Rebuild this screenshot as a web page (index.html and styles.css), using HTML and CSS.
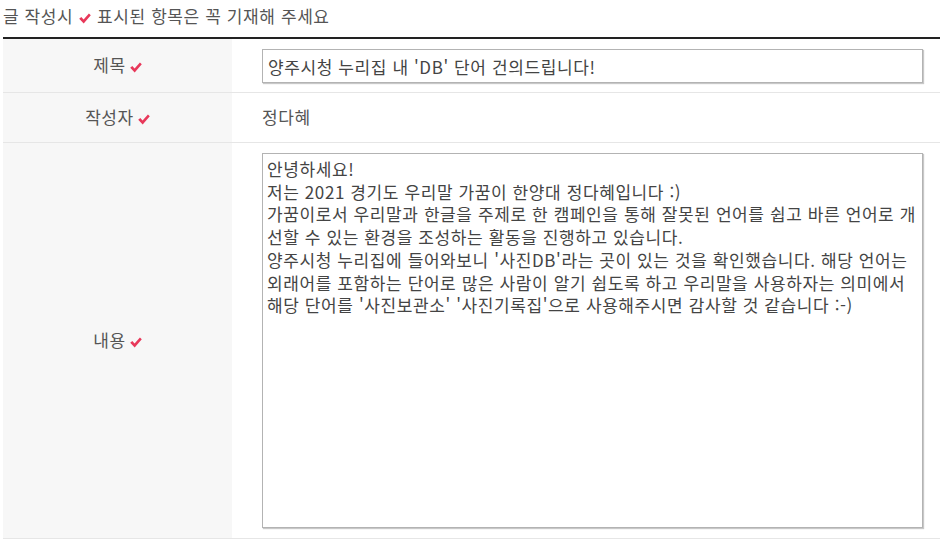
FILE: index.html
```html
<!DOCTYPE html>
<html lang="ko">
<head>
<meta charset="utf-8">
<title>글쓰기</title>
<link rel="stylesheet" href="styles.css">
</head>
<body>
<div class="page">
  <p class="notice">글 작성시 <svg class="req" viewBox="0 0 12 11" aria-hidden="true"><path d="M0.2 5.8 L2.3 4.1 L4.6 6.5 L9.9 0.6 L11.8 2.2 L4.7 10.4 Z"/></svg> 표시된 항목은 꼭 기재해 주세요</p>
  <table class="form">
    <tr class="row-title">
      <th>제목<svg class="req" viewBox="0 0 12 11" aria-hidden="true"><path d="M0.2 5.8 L2.3 4.1 L4.6 6.5 L9.9 0.6 L11.8 2.2 L4.7 10.4 Z"/></svg></th>
      <td><input class="field" type="text" value="양주시청 누리집 내 'DB' 단어 건의드립니다!"></td>
    </tr>
    <tr class="row-writer">
      <th>작성자<svg class="req" viewBox="0 0 12 11" aria-hidden="true"><path d="M0.2 5.8 L2.3 4.1 L4.6 6.5 L9.9 0.6 L11.8 2.2 L4.7 10.4 Z"/></svg></th>
      <td class="text">정다혜</td>
    </tr>
    <tr class="row-body">
      <th>내용<svg class="req" viewBox="0 0 12 11" aria-hidden="true"><path d="M0.2 5.8 L2.3 4.1 L4.6 6.5 L9.9 0.6 L11.8 2.2 L4.7 10.4 Z"/></svg></th>
      <td><textarea class="area" wrap="off">안녕하세요!
저는 2021 경기도 우리말 가꿈이 한양대 정다혜입니다 :)
가꿈이로서 우리말과 한글을 주제로 한 캠페인을 통해 잘못된 언어를 쉽고 바른 언어로 개
선할 수 있는 환경을 조성하는 활동을 진행하고 있습니다.
양주시청 누리집에 들어와보니 '사진DB'라는 곳이 있는 것을 확인했습니다. 해당 언어는
외래어를 포함하는 단어로 많은 사람이 알기 쉽도록 하고 우리말을 사용하자는 의미에서
해당 단어를 '사진보관소' '사진기록집'으로 사용해주시면 감사할 것 같습니다 :-)</textarea></td>
    </tr>
  </table>
</div>
</body>
</html>
```

FILE: styles.css
```css
html, body {
  margin: 0;
  padding: 0;
  background: #fff;
}
body {
  font-family: "Noto Sans CJK KR", "Noto Sans", sans-serif;
  font-size: 17px;
  letter-spacing: 0.6px;
  color: #555;
}
.page {
  padding-left: 3px;
}
.notice {
  margin: 0;
  padding: 4px 0 10px;
  line-height: 23px;
  color: #555;
}
.req {
  width: 12px;
  height: 11px;
  fill: #e8385a;
  margin-left: 4px;
  vertical-align: -1px;
}
.notice .req {
  margin: 0 1px 0 0;
}
.form {
  width: 100%;
  border-collapse: separate;
  border-spacing: 0;
  border-top: 2px solid #222;
}
.form th,
.form td {
  border-bottom: 1px solid #e6e6e6;
  vertical-align: middle;
  line-height: 23px;
}
.form th {
  width: 229px;
  background: #f7f7f7;
  font-weight: normal;
  color: #555;
  text-align: center;
  padding: 0 0 3px;
}
.form td {
  padding: 10px 17px 9px 30px;
  text-align: left;
}
.form td.text {
  padding-top: 12px;
  padding-bottom: 14px;
  color: #555;
}
.row-body td {
  padding-bottom: 10px;
}
.field,
.area {
  display: block;
  box-sizing: border-box;
  width: 100%;
  margin: 0;
  font-family: "Noto Sans CJK KR", "Noto Sans", sans-serif;
  font-size: 17px;
  letter-spacing: 0.6px;
  color: #444;
  background: #fff;
  border: 1px solid #b3b3b3;
  box-shadow: 1px 1px 1px #c8c8c8;
  border-radius: 0;
  outline: none;
}
.field {
  height: 34px;
  padding: 0 5px;
  line-height: 32px;
}
.area {
  height: 375px;
  padding: 4px 4px 2px;
  line-height: 22.7px;
  resize: none;
  overflow: hidden;
  white-space: pre;
}
```
